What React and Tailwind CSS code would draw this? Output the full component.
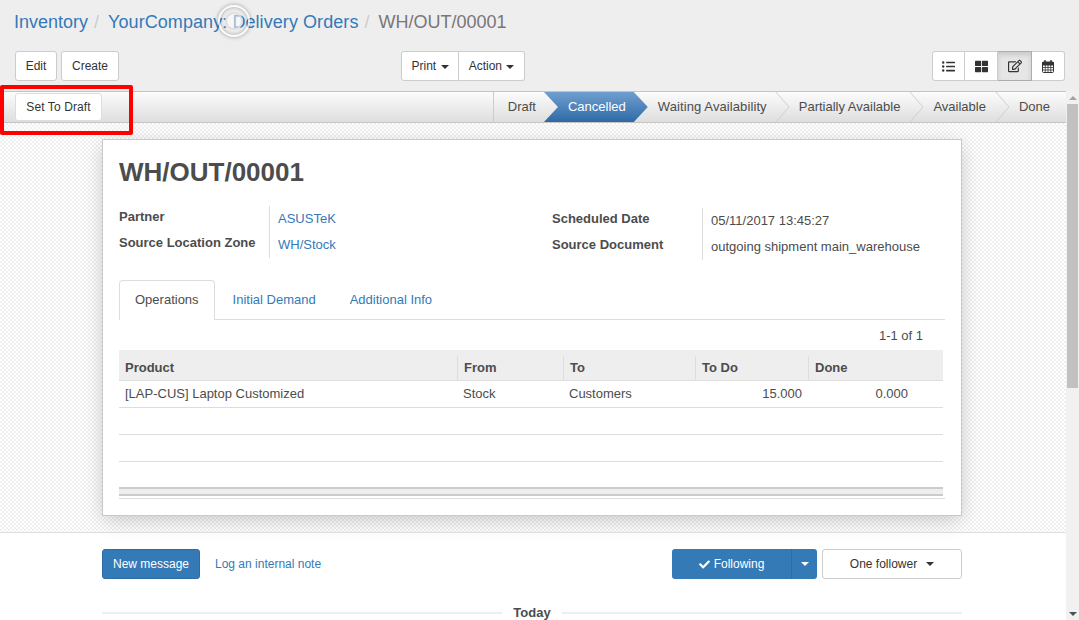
import React from 'react';
import { FaListUl, FaThLarge, FaRegEdit, FaCheck } from 'react-icons/fa';

const Caret = ({ color = 'border-t-[#333]', className = '' }) => (
  <span className={`inline-block w-0 h-0 border-x-4 border-x-transparent border-t-4 ${color} ${className}`} />
);

const Btn = ({ children, className = 'px-[10px]' }) => (
  <button className={`h-[30px] whitespace-nowrap bg-white border border-[#ccc] rounded-[3px] text-[12px] text-[#333] ${className}`}>
    {children}
  </button>
);

// fa-calendar from the old icon font, the packaged ones have no grid
const CalendarIcon = () => (
  <svg width="12" height="13" viewBox="0 0 12 13" fill="none" stroke="#333">
    <rect x="0.5" y="2" width="11" height="10.5" rx="1" />
    <path d="M0.5 2.5H11.5V5H0.5Z" fill="#333" />
    <path d="M0.5 7.5H11.5M0.5 10H11.5M3.25 5V12.5M6 5V12.5M8.75 5V12.5" strokeWidth="0.8" />
    <path d="M3 0V3M9 0V3" strokeWidth="1.4" />
  </svg>
);

const Chevron = () => (
  <svg className="absolute top-0 left-full h-full w-[15px]" viewBox="0 0 15 30" preserveAspectRatio="none">
    <path d="M0 -1 L14 15 L0 31" fill="none" stroke="#cfcfcf" strokeWidth="1" />
  </svg>
);

const Step = ({ label, className = 'pr-2' }) => (
  <div className={`relative flex items-center pl-6 text-[#4c4c4c] ${className}`}>
    {label}
    <Chevron />
  </div>
);

const Field = ({ label, children }) => (
  <div className="flex h-[26px]">
    <div className="w-[150px] pt-[1px] font-bold text-[#4c4c4c]">{label}</div>
    <div className="pl-[8px] pt-[3px] border-l border-[#ddd]">{children}</div>
  </div>
);

const Th = ({ children, first }) => (
  <th className="p-0 text-left font-bold text-[#4c4c4c]">
    <div className={`h-[24px] mt-[6px] pl-[6px] leading-[23px] ${first ? '' : 'border-l border-[#ddd]'}`}>{children}</div>
  </th>
);

export default function App() {
  return (
    <div className="relative h-[620px] w-[1079px] overflow-hidden bg-white font-['Liberation_Sans',Arial,sans-serif] text-[13px] text-[#4c4c4c]">
      {/* Control panel */}
      <div className="h-[91px] bg-[#efeeef] pl-[15px] pr-[14px]">
        <div className="-ml-px flex h-[51px] items-start pt-[12px] text-[18px] leading-[20px]">
          <a className="text-[#337ab7]">Inventory</a>
          <span className="pl-[6px] pr-[9px] text-[#ccc]">/</span>
          <a className="text-[#337ab7] tracking-[0.07px]">YourCompany: Delivery Orders</a>
          <span className="pl-[6px] pr-[9px] text-[#ccc]">/</span>
          <span className="text-[#777]">WH/OUT/00001</span>
        </div>
        <div className="flex items-center justify-between">
          <div className="flex w-[386px] gap-1">
            <Btn className="w-[42px]">Edit</Btn>
            <Btn>Create</Btn>
          </div>
          <div className="flex">
            <Btn className="w-[58px] rounded-r-none">Print <Caret className="ml-[1px] align-middle" /></Btn>
            <Btn className="w-[66px] rounded-l-none border-l-0">Action <Caret className="ml-[1px] align-middle" /></Btn>
          </div>
          <div className="ml-auto flex">
            <button className="flex h-[30px] w-[33px] items-center justify-center rounded-l-[3px] border border-[#ccc] bg-white text-[#333]"><FaListUl size={13} /></button>
            <button className="flex h-[30px] w-[33px] items-center justify-center border border-l-0 border-[#ccc] bg-white text-[#333]"><FaThLarge size={13} /></button>
            <button className="flex h-[30px] w-[34px] items-center justify-center border border-l-0 border-[#adadad] bg-[#e6e6e6] text-[#333] shadow-[inset_0_3px_5px_rgba(0,0,0,0.125)]"><FaRegEdit size={14} /></button>
            <button className="flex h-[30px] w-[33px] items-center justify-center rounded-r-[3px] border border-l-0 border-[#ccc] bg-white text-[#333]"><CalendarIcon /></button>
          </div>
        </div>
      </div>

      <div className="flex h-[529px]">
        <div className="w-[1066px]">
          {/* Status bar */}
          <div className="flex h-[32px] items-stretch justify-between border-y border-[#c4c4c4] bg-gradient-to-b from-[#fcfcfc] to-[#dedede]">
            <div className="pl-[15px] pt-[1px]">
              <button className="h-[28px] w-[87px] rounded-[3px] border border-[#ddd] bg-white text-[12px] tracking-[0.1px] text-[#333]">Set To Draft</button>
            </div>
            <div className="flex pr-4">
              <div className="flex items-center border-l border-[#ccc] pl-[14px] pr-2">Draft</div>
              <div className="relative z-10 flex items-center pl-6 pr-2 text-white">
                <div className="absolute inset-y-0 left-0 right-[-14px] bg-gradient-to-b from-[#6f9fd0] to-[#2f6aa6] [clip-path:polygon(0_0,calc(100%-14px)_0,100%_50%,calc(100%-14px)_100%,0_100%,14px_50%)]" />
                <span className="relative">Cancelled</span>
              </div>
              <Step label="Waiting Availability" className="pr-2 tracking-[0.1px]" />
              <Step label="Partially Available" className="pr-[9px]" />
              <Step label="Available" className="pr-[9px]" />
              <div className="flex items-center pl-6">Done</div>
            </div>
          </div>

          {/* Sheet */}
          <div className="h-[409px] bg-[image:repeating-conic-gradient(#f0f0f0_0_25%,#ffffff_0_50%)] bg-[length:4px_4px] px-[102px] pt-4">
            <div className="h-[377px] w-[860px] border border-[#c8c8c8] bg-white px-4 shadow-[0_5px_20px_-1px_rgba(0,0,0,0.2)]">
              <h1 className="h-[66px] pt-[16px] text-[26px] font-bold leading-[32px] text-[#4c4c4c]">WH/OUT/00001</h1>
              <div className="flex">
                <div className="w-[433px]">
                  <Field label="Partner"><a className="text-[#337ab7]">ASUSTeK</a></Field>
                  <Field label="Source Location Zone"><a className="text-[#337ab7]">WH/Stock</a></Field>
                </div>
                <div className="pt-[2px]">
                  <Field label="Scheduled Date">05/11/2017 13:45:27</Field>
                  <Field label="Source Document">outgoing shipment main_warehouse</Field>
                </div>
              </div>

              {/* Tabs */}
              <div className="mt-[20px] flex h-[40px] gap-[3px] border-b border-[#ddd]">
                <div className="h-[40px] rounded-t-[4px] border border-b-0 border-[#ddd] bg-white px-[15px] pt-[9px]">Operations</div>
                <a className="px-[15px] pt-[10px] text-[#337ab7]">Initial Demand</a>
                <a className="ml-px px-[15px] pt-[10px] text-[#337ab7]">Additional Info</a>
              </div>
              <div className="h-[30px] pr-[22px] pt-[6px] text-right">1-1 of 1</div>

              <table className="w-[824px] table-fixed border-collapse text-[13px]">
                <colgroup>
                  <col className="w-[338px]" />
                  <col className="w-[106px]" />
                  <col className="w-[132px]" />
                  <col className="w-[113px]" />
                  <col className="w-[135px]" />
                </colgroup>
                <thead>
                  <tr className="h-[30px] border-b border-[#ddd] bg-[#eee]">
                    <Th first>Product</Th>
                    <Th>From</Th>
                    <Th>To</Th>
                    <Th>To Do</Th>
                    <Th>Done</Th>
                  </tr>
                </thead>
                <tbody>
                  <tr className="h-[27px] border-b border-[#ddd]">
                    <td className="pl-[6px]">[LAP-CUS] Laptop Customized</td>
                    <td className="pl-[6px]">Stock</td>
                    <td className="pl-[6px]">Customers</td>
                    <td className="pr-[6px] text-right">15.000</td>
                    <td className="pr-[35px] text-right">0.000</td>
                  </tr>
                  <tr className="h-[27px] border-b border-[#ddd]"><td colSpan={5} /></tr>
                  <tr className="h-[27px] border-b border-[#ddd]"><td colSpan={5} /></tr>
                </tbody>
              </table>
              <div className="mt-[25px] h-[9px] w-[824px] border-y-2 border-t-[#ccc] border-b-[#ccc] bg-[#eee]" />
              <div className="mt-[2px] w-[826px] border-t border-[#ddd]" />
            </div>
          </div>

          {/* Chatter */}
          <div className="border-t border-[#ddd] pl-[102px] pr-[104px]">
            <div className="flex items-center justify-between pt-4">
              <div className="flex items-center gap-[15px] text-[12px]">
                <button className="h-[30px] w-[98px] rounded-[3px] border border-[#2e6da4] bg-[#337ab7] text-white">New message</button>
                <a className="text-[#337ab7]">Log an internal note</a>
              </div>
              <div className="flex gap-[5px] text-[12px]">
                <div className="flex h-[30px] rounded-[3px] bg-[#337ab7] text-white">
                  <button className="flex w-[119px] items-center justify-center gap-1"><FaCheck size={11} /> Following</button>
                  <button className="flex w-[26px] items-center justify-center border-l border-[#2e6da4]"><Caret color="border-t-white" /></button>
                </div>
                <button className="flex h-[30px] w-[140px] items-center justify-center gap-[9px] rounded-[3px] border border-[#ccc] bg-white text-[#333]">One follower <Caret /></button>
              </div>
            </div>
            <div className="mt-[24px] flex items-center">
              <div className="h-[2px] flex-1 bg-[#eee]" />
              <span className="px-[11px] font-bold">Today</span>
              <div className="h-[2px] flex-1 bg-[#eee]" />
            </div>
          </div>
        </div>

        {/* Scrollbar */}
        <div className="relative w-[13px] bg-[#f1f1f1]">
          <div className="absolute left-[3px] top-[5px] h-0 w-0 border-x-[4px] border-b-[4px] border-x-transparent border-b-[#a3a3a3]" />
          <div className="absolute inset-x-[1px] top-[13px] h-[284px] bg-[#c1c1c1]" />
          <div className="absolute bottom-[4px] left-[3px] h-0 w-0 border-x-[4px] border-t-[4px] border-x-transparent border-t-[#505050]" />
        </div>
      </div>

      {/* Spinner caught in the capture */}
      <div className="absolute left-[218px] top-[5px] flex h-[32px] w-[32px] items-center justify-center rounded-full border-2 border-white/70 shadow-[0_0_4px_rgba(0,0,0,0.35),inset_0_0_4px_rgba(0,0,0,0.3)]">
        <div className="h-[18px] w-[18px] rounded-full border-2 border-[#d8d8d8]/80 bg-white/50" />
      </div>
      {/* Red annotation box */}
      <div className="absolute left-0 top-[85px] h-[50px] w-[133px] rounded-[2px] border-4 border-[#f00]" />
    </div>
  );
}
